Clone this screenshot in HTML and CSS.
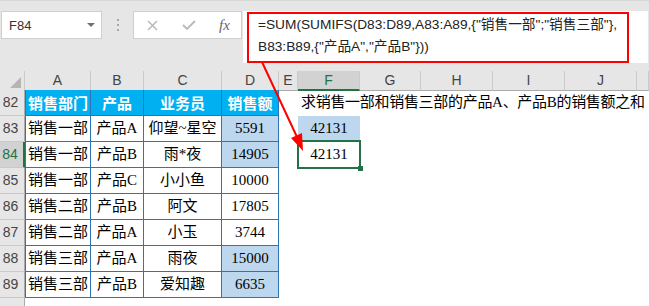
FILE: index.html
```html
<!DOCTYPE html>
<html lang="zh-CN">
<head>
  <meta charset="UTF-8">
  <title>SUMIFS 多条件求和</title>
  <link rel="stylesheet" href="styles.css">
</head>
<body>
  <div class="toolbar">
    <div class="namebox">F84<span class="caret"></span></div>
    <div class="grip"><i></i><i></i><i></i></div>
    <div class="fxbtns">
      <svg width="11" height="11" viewBox="0 0 11 11"><path d="M1 1L10 10M10 1L1 10" stroke="#b9b9b9" stroke-width="1.5" fill="none"/></svg>
      <svg width="14" height="10" viewBox="0 0 14 10"><path d="M1 5L5 9L13 1" stroke="#b9b9b9" stroke-width="1.8" fill="none"/></svg>
      <span class="fx">fx</span>
    </div>
    <div class="formula">
      <div class="mark">=SUM(SUMIFS(D83:D89,A83:A89,{"销售一部";"销售三部"},<br>B83:B89,{"产品A","产品B"}))</div>
    </div>
  </div>

  <div class="sheet">
    <div class="colhead">
      <div class="ch corner"><span class="tri"></span></div>
      <div class="ch">A</div>
      <div class="ch">B</div>
      <div class="ch">C</div>
      <div class="ch">D</div>
      <div class="ch">E</div>
      <div class="ch sel">F</div>
      <div class="ch">G</div>
      <div class="ch">H</div>
      <div class="ch">I</div>
      <div class="ch">J</div>
      <div class="ch"></div>
    </div>
    <div class="row">
      <div class="rh">82</div>
      <div class="c t first th">销售部门</div>
      <div class="c t th">产品</div>
      <div class="c t th">业务员</div>
      <div class="c t th">销售额</div>
      <div class="c"></div>
      <div class="c note">求销售一部和销售三部的产品A、产品B的销售额之和</div>
    </div>
    <div class="row">
      <div class="rh">83</div>
      <div class="c t first">销售一部</div>
      <div class="c t">产品A</div>
      <div class="c t">仰望~星空</div>
      <div class="c t hl">5591</div>
      <div class="c"></div>
      <div class="c hl">42131</div>
    </div>
    <div class="row">
      <div class="rh sel">84</div>
      <div class="c t first">销售一部</div>
      <div class="c t">产品B</div>
      <div class="c t">雨*夜</div>
      <div class="c t hl">14905</div>
      <div class="c"></div>
      <div class="c active">42131</div>
    </div>
    <div class="row">
      <div class="rh">85</div>
      <div class="c t first">销售一部</div>
      <div class="c t">产品C</div>
      <div class="c t">小小鱼</div>
      <div class="c t">10000</div>
    </div>
    <div class="row">
      <div class="rh">86</div>
      <div class="c t first">销售二部</div>
      <div class="c t">产品B</div>
      <div class="c t">阿文</div>
      <div class="c t">17805</div>
    </div>
    <div class="row">
      <div class="rh">87</div>
      <div class="c t first">销售二部</div>
      <div class="c t">产品A</div>
      <div class="c t">小玉</div>
      <div class="c t">3744</div>
    </div>
    <div class="row">
      <div class="rh">88</div>
      <div class="c t first">销售三部</div>
      <div class="c t">产品A</div>
      <div class="c t">雨夜</div>
      <div class="c t hl">15000</div>
    </div>
    <div class="row">
      <div class="rh">89</div>
      <div class="c t first">销售三部</div>
      <div class="c t">产品B</div>
      <div class="c t">爱知趣</div>
      <div class="c t hl">6635</div>
    </div>
    <div class="row">
      <div class="rh"></div>
    </div>
  </div>

  <!-- annotation arrow from the formula to the result cell -->
  <svg class="arrow" width="649" height="306" viewBox="0 0 649 306">
    <line x1="262" y1="62" x2="297" y2="137" stroke="#ff0000" stroke-width="2"/>
    <polygon points="303,151 291,138 302,133" fill="#ff0000"/>
  </svg>
</body>
</html>
```

FILE: styles.css
```css
* { box-sizing: border-box; }
body { margin: 0; height: 306px; background: #fff; font-family: "Liberation Sans", "Noto Sans CJK SC", sans-serif; overflow: hidden; position: relative; }

.toolbar { height: 71px; background: #e6e6e6; border-top: 1px solid #d6d6d6; padding-top: 10px; display: flex; align-items: flex-start; }
.namebox { margin-left: 1px; width: 101px; height: 28px; background: #fff; border: 1px solid #cfcfcf; display: flex; align-items: center; justify-content: space-between; padding: 0 6px 0 7px; font-size: 13px; color: #333; }
.caret { border-left: 4px solid transparent; border-right: 4px solid transparent; border-top: 4px solid #707070; }
.grip { width: 31px; height: 28px; padding-top: 8px; display: flex; flex-direction: column; align-items: center; gap: 3px; }
.grip i { width: 2px; height: 2px; background: #a9a9a9; }
.fxbtns { width: 109px; height: 28px; background: #fff; border: 1px solid #cfcfcf; display: flex; align-items: center; padding-left: 13px; gap: 24px; }
.fx { font-family: "Liberation Serif", serif; font-style: italic; font-size: 15px; color: #666; margin-left: -1px; }
.formula { flex: 1; height: 52px; margin: 0 1px 0 1px; background: #fff; padding: 1px 0 0 4px; }
.mark { width: 382px; height: 51px; border: 2px solid #ff0000; padding-left: 9px; font-size: 13.7px; line-height: 22px; color: #222; white-space: nowrap; }

.sheet { height: 235px; overflow: hidden; }
.colhead, .row { display: grid; grid-template-columns: 25px 66px 53px 78px 57px 19px 62px 61px 72px 72px 72px 1fr; }
.colhead { height: 19px; }
.ch { background: #e6e6e6; border-right: 1px solid #cacaca; border-bottom: 1px solid #ababab; font-size: 14px; color: #444; text-align: center; line-height: 18px; }
.ch.sel { background: #d2d2d2; color: #217346; border-bottom: 2px solid #217346; }
.corner { display: flex; align-items: flex-end; justify-content: flex-end; padding: 0 3px 2px 0; }
.tri { width: 0; height: 0; border-left: 11px solid transparent; border-bottom: 11px solid #b5b5b5; }

.row { height: 26px; }
.rh { background: #e6e6e6; border-right: 1px solid #ababab; border-bottom: 1px solid #cacaca; font-size: 14px; color: #444; text-align: center; line-height: 25px; padding-right: 3px; }
.rh.sel { background: #d2d2d2; color: #217346; border-right: 2px solid #217346; }

.c { font-family: "Liberation Serif", "Noto Sans CJK SC", serif; font-size: 15px; line-height: 25px; text-align: center; white-space: nowrap; color: #000; }
.t { border-right: 1px solid #2e75b6; border-bottom: 1px solid #2e75b6; }
.t.first { border-left: 1px solid #2e75b6; }
.th { background: #00b0f0; color: #fff; font-weight: bold; font-family: "Noto Sans CJK SC", sans-serif; }
.hl { background: #bdd7ee; }
.note { text-align: left; padding-left: 3px; overflow: visible; letter-spacing: -0.3px; }

.active { position: relative; }
.active::after { content: ""; position: absolute; top: -2px; left: -1px; right: -1px; bottom: -1px; border: 2px solid #217346; }
.active::before { content: ""; position: absolute; right: -3px; bottom: -3px; width: 5px; height: 5px; background: #217346; z-index: 1; }

.arrow { position: absolute; top: 0; left: 0; pointer-events: none; }
```
